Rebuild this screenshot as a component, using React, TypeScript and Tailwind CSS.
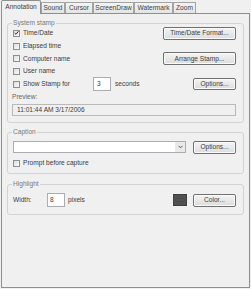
import React from "react";

const Checkbox = ({ checked = false }: { checked?: boolean }) => (
  <div className="w-[7px] h-[7px] shrink-0 border border-[#8e8f8f] bg-gradient-to-br from-[#dedede] to-[#fafafa] flex items-center justify-center">
    {checked && (
      <svg width="6" height="6" viewBox="0 0 6 6">
        <path d="M0.8 3 L2.4 4.6 L5.3 0.9" fill="none" stroke="#2a2a2a" strokeWidth="1.2" />
      </svg>
    )}
  </div>
);

const Button = ({ w, h = "h-[13px]", children }: { w: string; h?: string; children: React.ReactNode }) => (
  <div
    className={`${w} ${h} shrink-0 rounded-[2px] border border-[#707070] bg-gradient-to-b from-[#f4f4f4] to-[#dcdcdc] shadow-[inset_0_0_0_1px_#fbfbfb] flex items-center justify-center leading-none text-[#3d3d3d]`}
  >
    {children}
  </div>
);

const Group = ({ title, className, children }: { title: string; className: string; children: React.ReactNode }) => (
  <div className={`relative border border-[#d3d3d3] rounded-[3px] ${className}`}>
    <span className="absolute left-[4px] top-[-5px] px-[1px] bg-[#f0f0f0] leading-[8px] text-[#7a7a7a]">{title}</span>
    {children}
  </div>
);

const CheckRow = ({ label, checked, right }: { label: string; checked?: boolean; right?: React.ReactNode }) => (
  <div className="h-[12.75px] flex items-center justify-between">
    <div className="flex items-center">
      <Checkbox checked={checked} />
      <span className="ml-[3px] leading-none">{label}</span>
    </div>
    {right}
  </div>
);

export default function App() {
  const tab = "h-[11px] border border-b-0 border-[#a3a3a3] bg-gradient-to-b from-[#f4f4f4] to-[#e4e4e4] flex items-center justify-center leading-none rounded-t-[1px]";
  return (
    <div className="w-[251px] h-[289px] bg-[#f0f0f0] overflow-hidden font-['Liberation_Sans',Arial,sans-serif] text-[6.6px] text-[#3d3d3d]">
      <div className="flex items-end h-[13px] pl-[1px]">
        <div className="relative z-10 h-[14px] mb-[-1px] w-[40px] border border-b-0 border-[#8e8f8f] bg-[#f0f0f0] rounded-t-[2px] flex items-center justify-center leading-none pb-[1px]">
          Annotation
        </div>
        <div className={`${tab} w-[24px]`}>Sound</div>
        <div className={`${tab} w-[28px]`}>Cursor</div>
        <div className={`${tab} w-[41px]`}>ScreenDraw</div>
        <div className={`${tab} w-[39px]`}>Watermark</div>
        <div className={`${tab} w-[23px]`}>Zoom</div>
      </div>
      <div className="ml-[1px] w-[249px] h-[275px] border border-[#8e8f8f] bg-[#f0f0f0] px-[5px] pt-[9px]">
        <Group title="System stamp" className="h-[100px] pt-[3px] pl-[5px] pr-[7px]">
          <CheckRow label="Time/Date" checked right={<Button w="w-[73px]">Time/Date Format...</Button>} />
          <CheckRow label="Elapsed time" />
          <CheckRow label="Computer name" right={<Button w="w-[73px]">Arrange Stamp...</Button>} />
          <CheckRow label="User name" />
          <div className="h-[12.75px] flex items-center justify-between">
            <div className="flex items-center">
              <Checkbox />
              <span className="ml-[3px] w-[70px] leading-none">Show Stamp for</span>
              <div className="w-[18px] h-[14px] border border-[#abadb3] bg-white flex items-center pl-[3px] leading-none">3</div>
              <span className="ml-[4px] leading-none">seconds</span>
            </div>
            <Button w="w-[43px]" h="h-[12px]">Options...</Button>
          </div>
          <div className="mt-[2.25px] h-[8px] leading-[8px] ml-[-1px] text-[#666]">Preview:</div>
          <div className="mt-[3px] ml-[-1px] w-[224px] h-[12px] border border-[#b9b9b9] pl-[4px] flex items-center leading-none">
            11:01:44 AM 3/17/2006
          </div>
        </Group>
        <Group title="Caption" className="mt-[9px] h-[42px] pt-[8px] pl-[5px] pr-[7px]">
          <div className="h-[12px] flex items-center justify-between">
            <div className="w-[173px] h-[12px] border border-[#abadb3] bg-white flex justify-end">
              <div className="w-[10px] h-full bg-[#e9e9e9] flex items-center justify-center">
                <svg width="5" height="4" viewBox="0 0 5 4">
                  <path d="M0.5 0.8 L2.5 2.8 L4.5 0.8" fill="none" stroke="#555" strokeWidth="1" />
                </svg>
              </div>
            </div>
            <Button w="w-[43px]">Options...</Button>
          </div>
          <div className="mt-[4px] h-[13px] flex items-center">
            <Checkbox />
            <span className="ml-[3px] leading-none">Prompt before capture</span>
          </div>
        </Group>
        <Group title="Highlight" className="mt-[10px] h-[31px] pt-[8px] pl-[5px] pr-[7px]">
          <div className="h-[14px] flex items-center justify-between">
            <div className="flex items-center">
              <span className="w-[34px] leading-none">Width:</span>
              <div className="w-[18px] h-[14px] border border-[#abadb3] bg-white flex items-center pl-[2px] leading-none">8</div>
              <span className="ml-[3px] leading-none">pixels</span>
            </div>
            <div className="flex items-center">
              <div className="w-[14px] h-[12px] bg-[#4f4f4f] border border-[#3f3f3f]" />
              <div className="ml-[6px]">
                <Button w="w-[43px]">Color...</Button>
              </div>
            </div>
          </div>
        </Group>
      </div>
    </div>
  );
}
